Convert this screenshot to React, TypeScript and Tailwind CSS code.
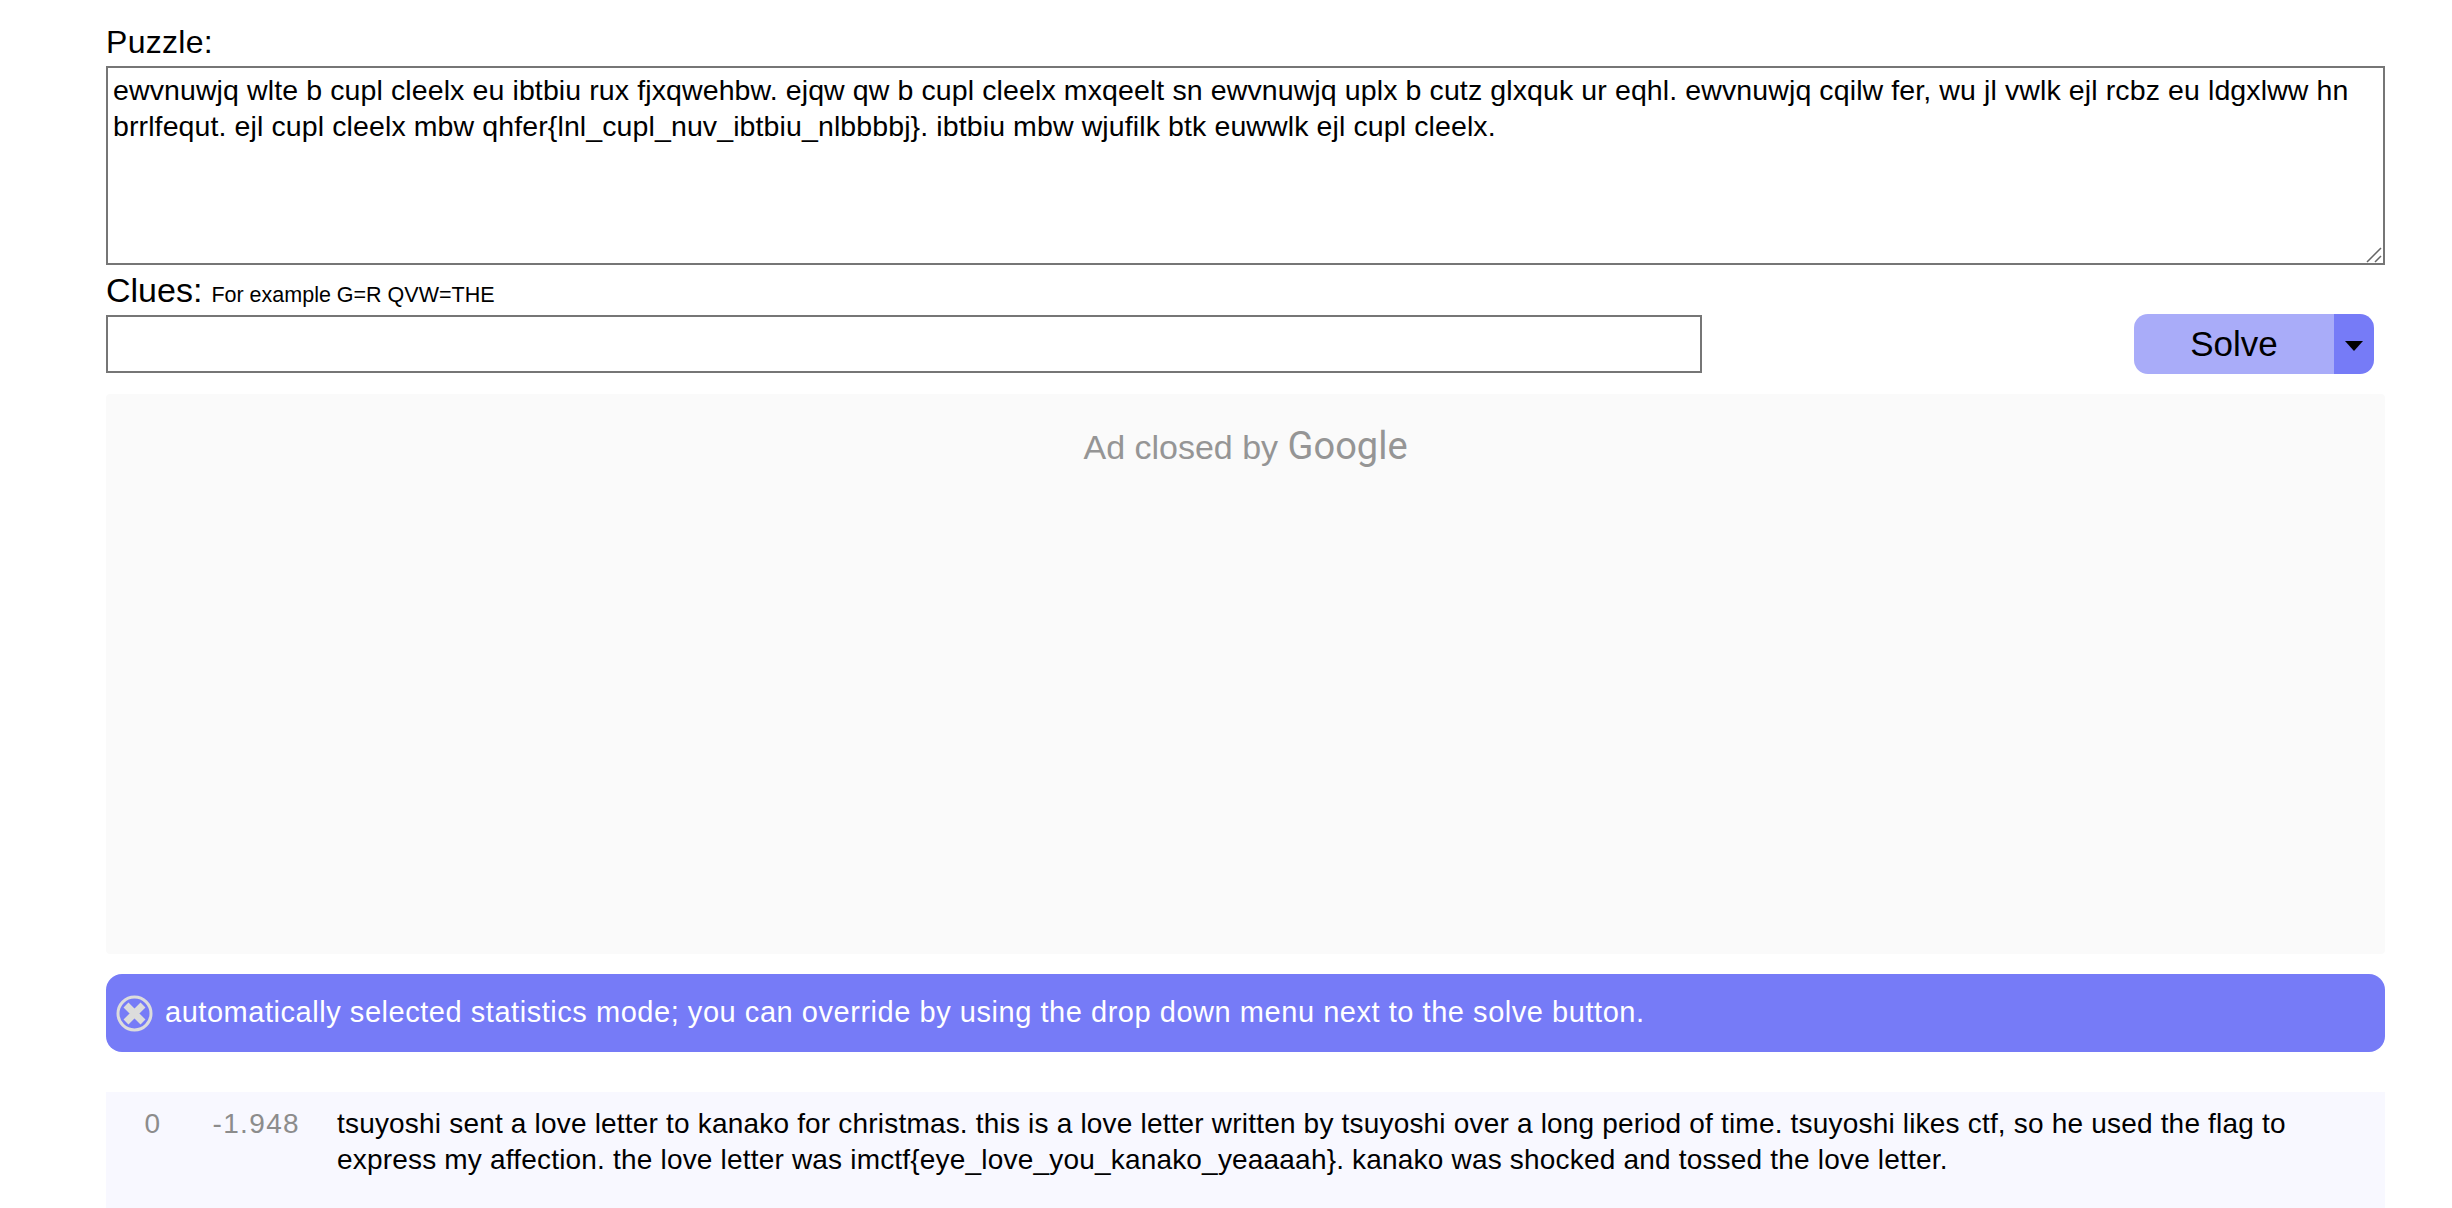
const puzzle =
  'ewvnuwjq wlte b cupl cleelx eu ibtbiu rux fjxqwehbw. ejqw qw b cupl cleelx mxqeelt sn ewvnuwjq uplx b cutz glxquk ur eqhl. ewvnuwjq cqilw fer, wu jl vwlk ejl rcbz eu ldgxlww hn brrlfequt. ejl cupl cleelx mbw qhfer{lnl_cupl_nuv_ibtbiu_nlbbbbj}. ibtbiu mbw wjufilk btk euwwlk ejl cupl cleelx.';

const result =
  'tsuyoshi sent a love letter to kanako for christmas. this is a love letter written by tsuyoshi over a long period of time. tsuyoshi likes ctf, so he used the flag to express my affection. the love letter was imctf{eye_love_you_kanako_yeaaaah}. kanako was shocked and tossed the love letter.';

export default function App() {
  return (
    <div className="h-[1208px] overflow-hidden bg-white pl-[106px] pr-[67px] pt-[22px] font-['Liberation_Sans',sans-serif] text-black">
      <div className="h-[44px] text-[32px] leading-[40px] tracking-[0.3px]">Puzzle:</div>
      <div className="relative">
        <textarea
          readOnly
          defaultValue={puzzle}
          className="block h-[199px] w-full resize-none border-2 border-[#767676] bg-white px-[5px] py-[4px] text-[28.5px] leading-[36px] tracking-[0.11px] outline-none"
        />
        <svg width="16" height="16" viewBox="0 0 16 16" className="absolute bottom-[2px] right-[3px]">
          <path d="M1 15 L15 1 M9 15 L15 9" stroke="#666" strokeWidth="1.5" />
        </svg>
      </div>
      <div className="mt-[6px] flex h-[43px] items-baseline gap-[9px] text-[34px] leading-[38px]">
        Clues:
        <span className="text-[21.5px]">For example G=R QVW=THE</span>
      </div>
      <div className="flex items-center justify-between pr-[11px]">
        <input readOnly className="block h-[58px] w-[1596px] border-2 border-[#767676] bg-white outline-none" />
        <div className="flex h-[60px] w-[240px] overflow-hidden rounded-[14px]">
          <button className="flex-1 bg-[#a9acf9] text-[35px]">Solve</button>
          <button className="flex w-[40px] items-center justify-center bg-[#767bf7]">
            <span className="mt-[4px] border-x-[9px] border-t-[10px] border-x-transparent border-t-black" />
          </button>
        </div>
      </div>
      <div className="mt-[20px] h-[560px] rounded-[4px] bg-[#fafafa] pt-[30px] text-center text-[#959595]">
        <span className="text-[34px] leading-[44px]">Ad closed by </span>
        <span className="font-['Roboto',sans-serif] text-[38px] leading-[44px]">Google</span>
      </div>
      <div className="mt-[20px] flex h-[78px] items-center rounded-[16px] bg-[#767bf7] pl-[10px] text-[29px] tracking-[0.54px] text-white">
        <svg width="37" height="37" viewBox="0 0 37 37" className="mr-[12px]">
          <circle cx="18.5" cy="18.5" r="16.5" fill="none" stroke="#dcdcdc" strokeWidth="3" />
          <path d="M10 10 L27 27 M27 10 L10 27" stroke="#dcdcdc" strokeWidth="7" />
        </svg>
        automatically selected statistics mode; you can override by using the drop down menu next to the solve button.
      </div>
      <div className="mt-[40px] flex h-[116px] bg-[#f8f8ff] pt-[14px] text-[28px] leading-[36px]">
        <div className="w-[54px] text-right text-[#8c8c8c]">0</div>
        <div className="w-[140px] text-right tracking-[1.35px] text-[#8c8c8c]">-1.948</div>
        <div className="ml-[37px] w-[1990px] tracking-[0.19px]">{result}</div>
      </div>
    </div>
  );
}
